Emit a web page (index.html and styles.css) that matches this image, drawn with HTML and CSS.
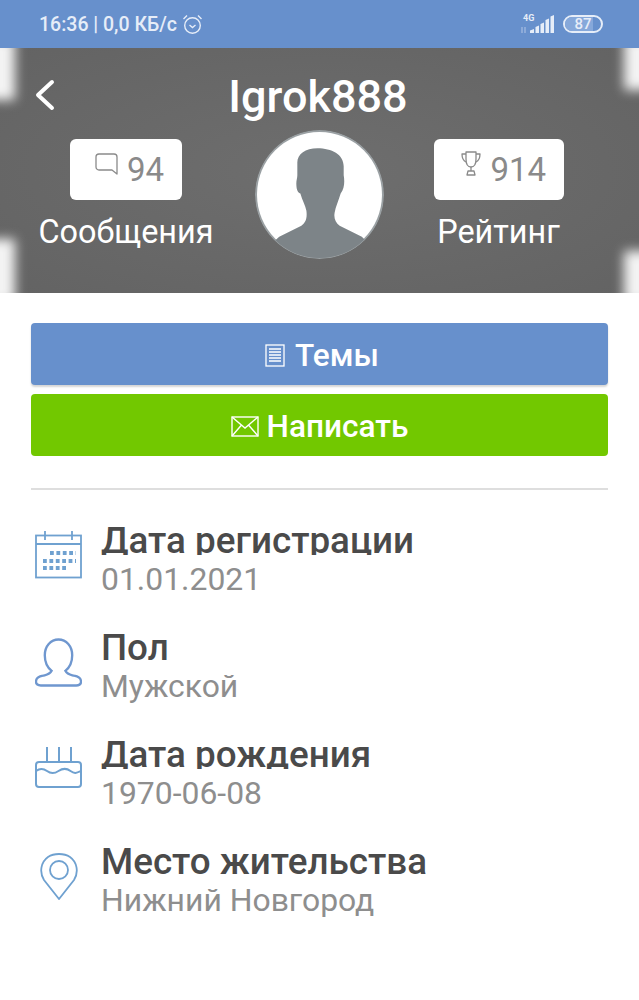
FILE: index.html
```html
<!DOCTYPE html>
<html lang="ru">

<head>
    <meta charset="utf-8">
    <title>Igrok888</title>
    <link rel="stylesheet" href="styles.css">
</head>

<body>
    <div class="status">
        <div class="status-left">
            <span>16:36 | 0,0 КБ/с</span>
            <svg class="alarm" width="21" height="21" viewBox="0 0 21 21" fill="none" stroke="#e6edf8" stroke-width="1.4">
                <circle cx="10.5" cy="11.5" r="7.8"/>
                <path d="M7.5 11l3 2.5 3-2.5"/>
                <path d="M1.5 5L5 1.5M19.5 5L16 1.5"/>
            </svg>
        </div>
        <div class="status-right">
            <div class="net">
                <span class="net-label">4G</span>
                <svg width="34" height="19" viewBox="0 0 34 19" fill="#e6edf8">
                    <path d="M1.5 12v6h1v-6zM4.5 12v6h1v-6z" opacity=".6"/>
                    <path d="M10 18v-2.5l4-1.500V18zM15.500 18v-6l3.500-1.500V18zM20.500 18V9l3.500-1.500V18zM25.500 18V5l3.500-1.500V18zM30.500 18V1.500L34 0v18z"/>
                </svg>
            </div>
            <div class="battery">
                <div class="battery-fill"></div>
                <span class="battery-num">87</span>
            </div>
        </div>
    </div>

    <div class="header">
        <div class="glow glow-tl"></div>
        <div class="glow glow-bl"></div>
        <div class="glow glow-tr"></div>
        <div class="glow glow-br"></div>

        <div class="title-row">
            <svg class="back" width="22" height="32" viewBox="0 0 22 32" fill="none" stroke="#fff" stroke-width="4" stroke-linecap="round" stroke-linejoin="round">
                <path d="M18 3L4 16l14 13"/>
            </svg>
            <h1 class="nick">Igrok888</h1>
        </div>

        <div class="stats">
            <div class="stat stat-left">
                <div class="badge">
                    <svg class="badge-icon" width="23" height="22" viewBox="0 0 23 22" fill="none" stroke="#8a8a8a" stroke-width="1.300" stroke-linejoin="round">
                        <path d="M4 1h15a3 3 0 0 1 3 3v17l-5-4H4a3 3 0 0 1-3-3V4a3 3 0 0 1 3-3z"/>
                    </svg>
                    <span>94</span>
                </div>
                <div class="stat-label">Сообщения</div>
            </div>

            <div class="avatar">
                <svg width="129" height="129" viewBox="0 0 128 128">
                    <defs>
                        <clipPath id="avatar-clip">
                            <circle cx="64" cy="64" r="63"/>
                        </clipPath>
                    </defs>
                    <circle cx="64" cy="64" r="64" fill="#9aa0a3"/>
                    <circle cx="64" cy="64" r="62" fill="#fff"/>
                    <path clip-path="url(#avatar-clip)" d="M24 106L46 95C50 92 52 88 51 80C50 75 47 70 45 63C42 62 41 58 41 53C41 50 42 48 42 45L42 32C42 24 50 18 62 18C76 18 88 24 88 36L88 45C89 50 89 58 85 63C83 70 80 76 79 82C78 88 80 92 84 95L106 106L128 128L0 128z" fill="#7d8488"/>
                </svg>
            </div>

            <div class="stat stat-right">
                <div class="badge badge-wide">
                    <svg class="badge-icon" width="20" height="25" viewBox="0 0 20 25" fill="none" stroke="#8a8a8a" stroke-width="1.300" stroke-linejoin="round">
                        <path d="M5 1h10v7c0 5-2 8-5 8S5 13 5 8z"/>
                        <path d="M5 3H1c0 5 2 7 4 8M15 3h4c0 5-2 7-4 8"/>
                        <path d="M10 16v4M6 24h8l-1-4H7z"/>
                    </svg>
                    <span>914</span>
                </div>
                <div class="stat-label">Рейтинг</div>
            </div>
        </div>
    </div>

    <div class="content">
        <a class="btn btn-blue">
            <svg width="20" height="23" viewBox="0 0 20 23" fill="none" stroke="#fff" stroke-width="1.300">
                <rect x="1" y="1" width="18" height="21"/>
                <path d="M4 5h12M4 8h12M4 11h12M4 14h12M4 17h12"/>
            </svg>
            Темы
        </a>
        <a class="btn btn-green">
            <svg width="28" height="21" viewBox="0 0 28 21" fill="none" stroke="#fff" stroke-width="1.400">
                <rect x="1" y="1" width="26" height="19"/>
                <path d="M1 1l13 11L27 1M1 20l9.500-11M27 20L17.500 9"/>
            </svg>
            Написать
        </a>

        <div class="divider"></div>

        <div class="info">
            <div class="info-row">
                <div class="icon-col">
                    <svg width="47" height="48" viewBox="0 0 47 48" fill="none" stroke="#6fa1d0" stroke-width="1.800">
                        <rect x="1" y="4.500" width="45" height="42"/>
                        <path d="M1 13h45M10 0v9M37 0v9"/>
                        <path d="M15 22h26M8 30h33M8 37h25" stroke-width="4" stroke-dasharray="3.800 2.600"/>
                    </svg>
                </div>
                <div class="info-text">
                    <div class="info-title">Дата регистрации</div>
                    <div class="info-value">01.01.2021</div>
                </div>
            </div>
            <div class="info-row">
                <div class="icon-col">
                    <svg width="48" height="49" viewBox="0 0 48 49" fill="none" stroke="#6f97cf" stroke-width="2.400">
                        <path d="M17 33C12 29 10 23 10 17C10 8 16 1 24 1C32 1 38 8 38 17C38 23 36 29 31 33C33 37 36 37 40 38C45 39 47 41 47 44C47 47 45 48 42 48H6C3 48 1 47 1 44C1 41 3 39 8 38C12 37 15 37 17 33z"/>
                    </svg>
                </div>
                <div class="info-text">
                    <div class="info-title">Пол</div>
                    <div class="info-value">Мужской</div>
                </div>
            </div>
            <div class="info-row">
                <div class="icon-col icon-col-cake">
                    <svg width="47" height="42" viewBox="0 0 47 42" fill="none" stroke="#6fa1d0" stroke-width="2">
                        <rect x="1" y="15" width="45" height="25" rx="3"/>
                        <path d="M1 24c4-3 7-3 11 0s7 3 11.500 0 8-3 12 0 6 2 10.500 0M12 0v14M24 0v14M36 0v14"/>
                    </svg>
                </div>
                <div class="info-text">
                    <div class="info-title">Дата рождения</div>
                    <div class="info-value">1970-06-08</div>
                </div>
            </div>
            <div class="info-row">
                <div class="icon-col">
                    <svg width="38" height="48" viewBox="0 0 38 48" fill="none" stroke="#6fa1d0" stroke-width="1.800">
                        <path d="M19 47L4 28C-1 20 1 10 8 5c6-4 16-4 22 0 7 5 9 15 4 23z"/>
                        <circle cx="19" cy="18" r="9"/>
                    </svg>
                </div>
                <div class="info-text">
                    <div class="info-title">Место жительства</div>
                    <div class="info-value">Нижний Новгород</div>
                </div>
            </div>
        </div>
    </div>
</body>

</html>
```

FILE: styles.css
```css
* {
    box-sizing: border-box;
}

body {
    margin: 0;
    background-color: #fff;
    font-family: Roboto, "Liberation Sans", sans-serif;
}

.status {
    display: flex;
    justify-content: space-between;
    align-items: center;
    height: 48px;
    padding: 0 36px 0 39px;
    background-color: #6790cc;
    color: #e6edf8;
}

.status-left {
    display: flex;
    align-items: center;
    gap: 5px;
    font-size: 19.500px;
    font-weight: 500;
}

.status-right {
    display: flex;
    align-items: center;
    gap: 9px;
}

.net {
    position: relative;
    width: 34px;
    height: 19px;
}

.net-label {
    position: absolute;
    top: -2px;
    left: 3px;
    font-size: 9px;
    font-weight: 700;
}

.battery {
    position: relative;
    width: 40px;
    height: 18px;
    border: 2px solid #e6edf8;
    border-radius: 9px;
    overflow: hidden;
}

.battery-fill {
    width: 78%;
    height: 100%;
    background-color: #86a8da;
}

.battery-num {
    position: absolute;
    top: -1px;
    left: 0;
    width: 100%;
    text-align: center;
    font-size: 15px;
    line-height: 17px;
    font-weight: 500;
}

.header {
    position: relative;
    height: 245px;
    padding-top: 23px;
    background: radial-gradient(ellipse at center, #6e6e6e 0%, #636363 100%);
    overflow: hidden;
}

/* blurred white patches in the corners of the background picture */
.glow {
    position: absolute;
    width: 28px;
    filter: blur(6px);
    background-color: #f4f4f4;
}

.glow-tl {
    left: -13px;
    top: -10px;
    height: 62px;
}

.glow-bl {
    left: -13px;
    bottom: -10px;
    height: 64px;
}

.glow-tr {
    right: -13px;
    top: -10px;
    height: 52px;
}

.glow-br {
    right: -13px;
    bottom: -10px;
    height: 52px;
}

.title-row {
    position: relative;
    display: flex;
    justify-content: center;
    height: 52px;
    padding-right: 3px;
}

.back {
    position: absolute;
    left: 34px;
    top: 8px;
}

.nick {
    margin: 0;
    font-size: 45px;
    line-height: 52px;
    font-weight: 500;
    color: #fff;
}

.stats {
    position: relative;
    display: flex;
    justify-content: center;
    margin-top: 8px;
}

.stat {
    display: flex;
    flex-direction: column;
    align-items: center;
    width: 255px;
    padding-top: 8px;
}

.stat-left {
    padding-right: 3px;
}

.stat-right {
    padding-right: 26px;
}

.badge {
    display: flex;
    align-items: center;
    gap: 9px;
    width: 112px;
    height: 61px;
    padding-left: 25px;
    border-radius: 6px;
    background-color: #fff;
    color: #8a8a8a;
    font-size: 33px;
}

.badge-wide {
    gap: 10px;
    width: 130px;
    padding-left: 27px;
}

.badge-icon {
    margin-top: -12px;
}

.stat-label {
    margin-top: 14px;
    font-size: 32.400px;
    line-height: 36px;
    white-space: nowrap;
    color: #fff;
}

.avatar {
    flex: none;
    width: 129px;
    height: 129px;
    margin-top: -1px;
    overflow: hidden;
    border-radius: 50%;
}

.content {
    padding: 30px 31px 0;
}

.btn {
    display: flex;
    justify-content: center;
    align-items: center;
    gap: 10px;
    height: 62px;
    margin-bottom: 9px;
    padding-top: 2px;
    border-radius: 4px;
    color: #fff;
    font-size: 31.600px;
    font-weight: 500;
}

.btn-blue {
    padding-left: 5px;
    background-color: #6790cc;
    box-shadow: 0 2px 2px #d5d5d5;
}

.btn-green {
    gap: 8px;
    background-color: #72c800;
}

.divider {
    height: 2px;
    margin-top: 32px;
    background-color: #dedede;
}

.info {
    padding-top: 31px;
}

.info-row {
    display: flex;
    align-items: flex-start;
    height: 107px;
}

.icon-col {
    flex: none;
    display: flex;
    justify-content: center;
    width: 70px;
    padding: 10px 19px 0 4px;
}

.icon-col-cake {
    padding-top: 12px;
}

.info-title {
    height: 34px;
    overflow: hidden;
    font-size: 36.800px;
    line-height: 40px;
    font-weight: 500;
    color: #4a4a4a;
}

.info-value {
    margin-top: 5px;
    font-size: 31.900px;
    line-height: 38px;
    color: #8e8e8e;
}
```
